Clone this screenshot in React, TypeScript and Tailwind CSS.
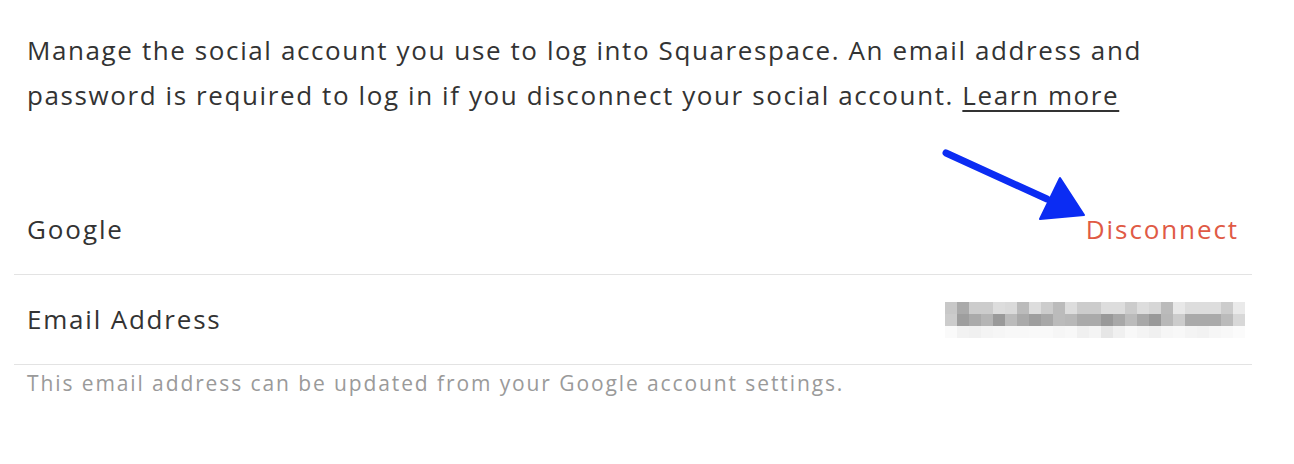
import React from 'react';

const blurRows: string[][] = [
  ['#c8c8c8', '#aaaaaa', '#cccccc', '#cccccc', '#dddddd', '#dadada', '#bbbbbb', '#dddddd', '#cccccc', '#bbbbbb', '#dddddd', '#cccccc', '#cccccc', '#dddddd', '#dddddd', '#cccccc', '#dddddd', '#d6d6d6', '#bbbbbb', '#e8e8e8', '#dddddd', '#dddddd', '#dddddd', '#cccccc', '#eaeaea'],
  ['#cccccc', '#9e9e9e', '#aaaaaa', '#b5b5b5', '#9a9a9a', '#bbbbbb', '#aaaaaa', '#9e9e9e', '#a8a8a8', '#bbbbbb', '#b8b8b8', '#aaaaaa', '#aaaaaa', '#999999', '#a8a8a8', '#bbbbbb', '#a8a8a8', '#999999', '#b8b8b8', '#cccccc', '#aaaaaa', '#aaaaaa', '#aaaaaa', '#bbbbbb', '#d8d8d8'],
  ['#fafafa', '#f2f2f2', '#f0f0f0', '#f4f4f4', '#f6f6f6', '#f8f8f8', '#f8f8f8', '#f9f9f9', '#f9f9f9', '#f6f6f6', '#f8f8f8', '#f0f0f0', '#f4f4f4', '#e6e6e6', '#f0f0f0', '#f8f8f8', '#f4f4f4', '#f0f0f0', '#f6f6f6', '#f8f8f8', '#f4f4f4', '#f2f2f2', '#f6f6f6', '#f8f8f8', '#fbfbfb'],
];

function BlurredEmail() {
  return (
    <div className="flex flex-col">
      {blurRows.map((row, i) => (
        <div key={i} className="flex h-[12px]">
          {row.map((c, j) => (
            <div key={j} className="w-[12px] h-full" style={{ backgroundColor: c }} />
          ))}
        </div>
      ))}
    </div>
  );
}

export default function App() {
  return (
    <div className="relative w-[1294px] h-[464px] bg-white font-['Open_Sans',sans-serif] text-[#333]">
      <div className="px-[14px] pt-[28px] w-[1266px]">
        <p className="px-[13px] text-[26px] leading-[45px] tracking-[1.6px] whitespace-nowrap">
          Manage the social account you use to log into Squarespace. An email address and
          <br />
          password is required to log in if you disconnect your social account.{' '}
          <a className="underline underline-offset-[5px] decoration-[2px]">Learn more</a>
        </p>

        <div className="mt-[67px]">
          <div className="flex h-[90px] items-center justify-between border-b border-[#e3e3e3] px-[13px] text-[26px] tracking-[1.9px]">
            <span>Google</span>
            <span className="text-[#e05a45]">Disconnect</span>
          </div>
          <div className="flex h-[90px] items-center justify-between border-b border-[#e3e3e3] pl-[13px] pr-[7px] text-[26px] tracking-[1.8px]">
            <span>Email Address</span>
            <BlurredEmail />
          </div>
        </div>

        <p className="mt-[5px] px-[13px] text-[21px] leading-[26px] tracking-[1.9px] text-[#9a9a9a]">
          This email address can be updated from your Google account settings.
        </p>
      </div>

      <svg className="absolute left-[935px] top-[145px]" width="160" height="85" viewBox="0 0 160 85">
        <line x1="11" y1="8" x2="112" y2="54" stroke="#0b2cf3" strokeWidth="7" strokeLinecap="round" />
        <polygon points="125,33 105,74 149,70" fill="#0b2cf3" stroke="#0b2cf3" strokeWidth="2" strokeLinejoin="round" />
      </svg>
    </div>
  );
}
